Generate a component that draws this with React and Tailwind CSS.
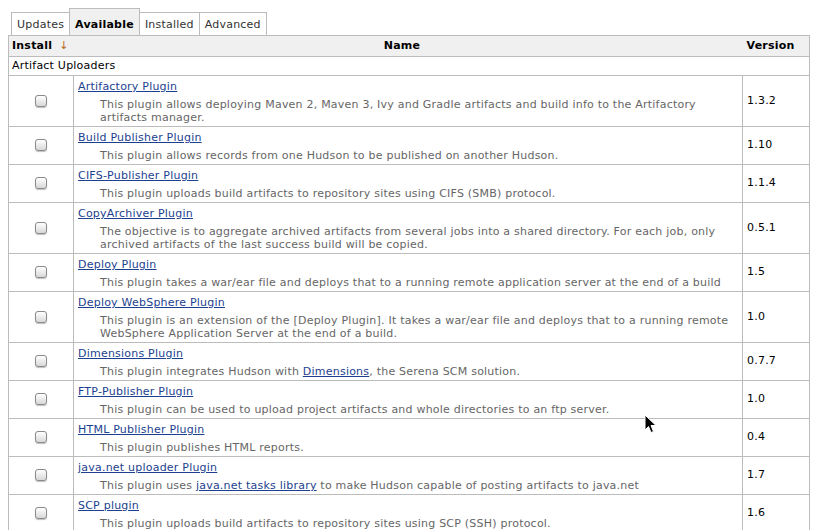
import React from 'react';

const plugins = [
  {
    name: 'Artifactory Plugin',
    lines: [
      ['This plugin allows deploying Maven 2, Maven 3, Ivy and Gradle artifacts and build info to the Artifactory'],
      ['artifacts manager.'],
    ],
    version: '1.3.2',
  },
  {
    name: 'Build Publisher Plugin',
    lines: [['This plugin allows records from one Hudson to be published on another Hudson.']],
    version: '1.10',
  },
  {
    name: 'CIFS-Publisher Plugin',
    lines: [['This plugin uploads build artifacts to repository sites using CIFS (SMB) protocol.']],
    version: '1.1.4',
  },
  {
    name: 'CopyArchiver Plugin',
    lines: [
      ['The objective is to aggregate archived artifacts from several jobs into a shared directory. For each job, only'],
      ['archived artifacts of the last success build will be copied.'],
    ],
    version: '0.5.1',
  },
  {
    name: 'Deploy Plugin',
    lines: [['This plugin takes a war/ear file and deploys that to a running remote application server at the end of a build']],
    version: '1.5',
  },
  {
    name: 'Deploy WebSphere Plugin',
    lines: [
      ['This plugin is an extension of the [Deploy Plugin]. It takes a war/ear file and deploys that to a running remote'],
      ['WebSphere Application Server at the end of a build.'],
    ],
    version: '1.0',
  },
  {
    name: 'Dimensions Plugin',
    lines: [['This plugin integrates Hudson with ', { link: 'Dimensions' }, ', the Serena SCM solution.']],
    version: '0.7.7',
  },
  {
    name: 'FTP-Publisher Plugin',
    lines: [['This plugin can be used to upload project artifacts and whole directories to an ftp server.']],
    version: '1.0',
  },
  {
    name: 'HTML Publisher Plugin',
    lines: [['This plugin publishes HTML reports.']],
    version: '0.4',
  },
  {
    name: 'java.net uploader Plugin',
    lines: [['This plugin uses ', { link: 'java.net tasks library' }, ' to make Hudson capable of posting artifacts to java.net']],
    version: '1.7',
  },
  {
    name: 'SCP plugin',
    lines: [['This plugin uploads build artifacts to repository sites using SCP (SSH) protocol.']],
    version: '1.6',
  },
];

const tabs = ['Updates', 'Available', 'Installed', 'Advanced'];

const Checkbox = () => (
  <span className="inline-block w-[12px] h-[12px] rounded-[3px] border border-[#8a8a8a] bg-gradient-to-b from-white to-[#d8d8d8] shadow-[0_1px_1px_rgba(0,0,0,0.25)] align-middle" />
);

const Cursor = () => (
  <svg className="absolute left-[644px] top-[414px] pointer-events-none" width="14" height="21" viewBox="0 0 14 21">
    <path d="M1 1 L1 16 L4.5 12.5 L7 18.5 L9.5 17.5 L7 11.5 L12 11.5 Z" fill="#000" stroke="#fff" strokeWidth="1" strokeLinejoin="round" />
  </svg>
);

export default function App() {
  return (
    <div className="relative w-[817px] min-h-[530px] bg-white pt-2 text-[11px] tracking-[0.22px] text-[#222] font-['DejaVu_Sans','Verdana',sans-serif]">
      {/* tab bar */}
      <div className="flex items-end pl-[11px] h-[27px]">
        {tabs.map((t, i) => {
          const active = t === 'Available';
          return (
            <div
              key={t}
              className={`border border-b-0 border-[#bcbcbc] px-[5px] leading-[13px] ${i > 0 ? '-ml-px' : ''} ${
                active ? 'relative z-10 h-[27px] pt-[9px] bg-[#f0f0f0] font-bold text-black' : 'h-[23px] pt-[5px] bg-white text-[#333]'
              }`}
            >
              {t}
            </div>
          );
        })}
      </div>

      <table className="ml-2 w-[802px] table-fixed border-collapse border border-[#bcbcbc]">
        <colgroup>
          <col className="w-[65px]" />
          <col />
          <col className="w-[67px]" />
        </colgroup>
        <thead>
          <tr className="bg-[#f0f0f0] h-[21px]">
            <th className="text-left font-bold pl-[3px] text-black border-b border-[#bcbcbc]">
              Install <span className="text-[#b8661c] font-normal ml-[3px]">↓</span>
            </th>
            <th className="text-center font-bold pr-[12px] text-black border-b border-[#bcbcbc]">Name</th>
            <th className="text-left font-bold pl-[4px] text-black border-b border-[#bcbcbc]">Version</th>
          </tr>
        </thead>
        <tbody>
          <tr className="h-[19px]">
            <td colSpan={3} className="pl-[3px] text-black border-b border-[#bcbcbc]">Artifact Uploaders</td>
          </tr>
          {plugins.map((p) => (
            <tr key={p.name}>
              <td className="border border-[#bcbcbc] text-center align-middle">
                <Checkbox />
              </td>
              <td className="border border-[#bcbcbc] pl-[4px] pt-[4px] pb-[2px] align-top">
                <div className="leading-[13px]">
                  <a className="text-[#1d3f8f] underline underline-offset-[1px]">{p.name}</a>
                </div>
                <div className="mt-[5px] pl-[22px] text-[#666] leading-[13px]">
                  {p.lines.map((line, li) => (
                    <div key={li} className="whitespace-nowrap">
                      {line.map((seg, si) =>
                        typeof seg === 'string' ? (
                          <span key={si}>{seg}</span>
                        ) : (
                          <a key={si} className="text-[#1d3f8f] underline underline-offset-[1px]">
                            {seg.link}
                          </a>
                        )
                      )}
                    </div>
                  ))}
                </div>
              </td>
              <td className="border border-[#bcbcbc] pl-[4px] align-middle text-black">{p.version}</td>
            </tr>
          ))}
        </tbody>
      </table>

      <Cursor />
    </div>
  );
}
